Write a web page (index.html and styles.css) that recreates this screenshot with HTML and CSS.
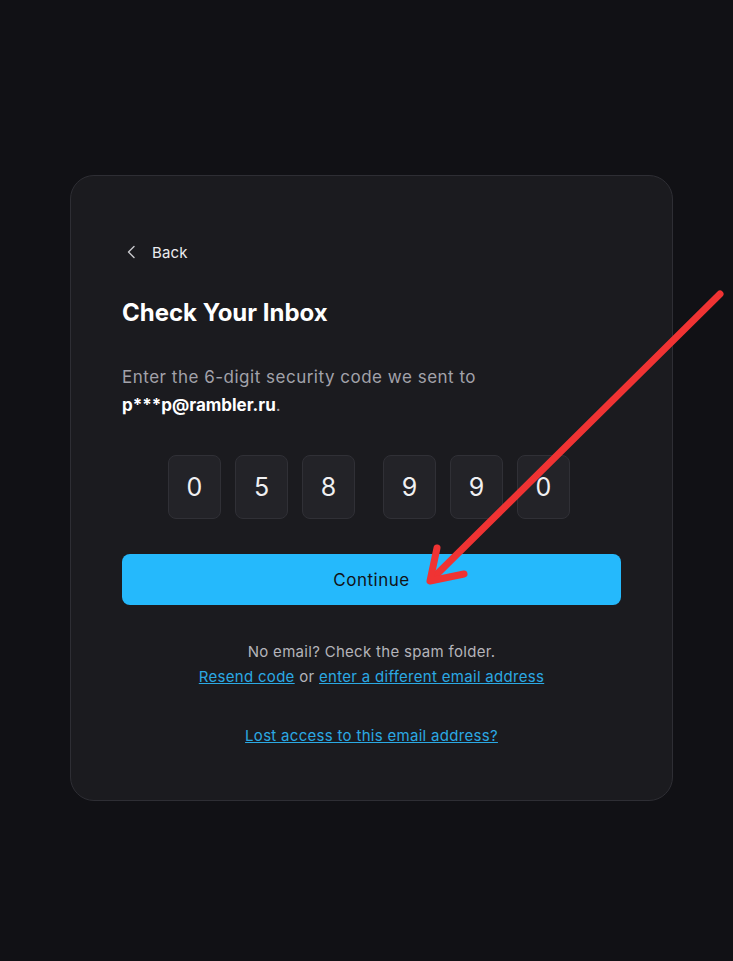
FILE: index.html
```html
<!DOCTYPE html>
<html lang="en">
<head>
    <meta charset="UTF-8">
    <meta name="viewport" content="width=device-width, initial-scale=1.0">
    <title>Check Your Inbox</title>
    <link rel="stylesheet" href="styles.css">
</head>
<body>
    <div class="card">
        <a class="back" href="#">
            <svg width="16" height="16" viewBox="0 0 16 16"><polyline points="10,2.5 4.5,8 10,13.5" fill="none" stroke="#c8c8cc" stroke-width="1.4" stroke-linecap="round" stroke-linejoin="round"/></svg>
            <span>Back</span>
        </a>

        <h1 class="title">Check Your Inbox</h1>

        <p class="desc">Enter the 6-digit security code we sent to <strong>p***p@rambler.ru</strong>.</p>

        <div class="code">
            <div class="group">
                <div class="digit">0</div>
                <div class="digit">5</div>
                <div class="digit">8</div>
            </div>
            <div class="group">
                <div class="digit">9</div>
                <div class="digit">9</div>
                <div class="digit">0</div>
            </div>
        </div>

        <button class="continue" type="button">Continue</button>

        <div class="help">
            <p>No email? Check the spam folder.</p>
            <p><a href="#">Resend code</a> or <a href="#">enter a different email address</a></p>
        </div>

        <p class="lost"><a href="#">Lost access to this email address?</a></p>
    </div>

    <!-- annotation arrow drawn over the screenshot -->
    <svg class="arrow" width="733" height="961" viewBox="0 0 733 961">
        <g fill="none" stroke="#f03333" stroke-width="7" stroke-linecap="round" stroke-linejoin="round">
            <line x1="720" y1="294" x2="431" y2="580"/>
            <polyline points="437,548 430,581 464,574"/>
        </g>
    </svg>
</body>
</html>
```

FILE: styles.css
```css
body {
    margin: 0;
    background: #111115;
    font-family: Inter, "Noto Sans", sans-serif;
    color: #f2f2f4;
    min-height: 961px;
}
.card {
    width: 499px;
    margin: 175px 0 0 70px;
    padding: 64px 51px 52px;
    background: #1b1b1f;
    border: 1px solid #2e2e34;
    border-radius: 24px;
}
.back {
    display: flex;
    align-items: center;
    gap: 12px;
    height: 24px;
    padding-left: 2px;
    color: #ececef;
    font-size: 15px;
    letter-spacing: 0.01em;
    text-decoration: none;
}
.title {
    margin: 33px 0 0;
    font-size: 24px;
    line-height: 32px;
    font-weight: 700;
    letter-spacing: 0;
    color: #ffffff;
}
.desc {
    margin: 34px 0 0;
    font-size: 17px;
    line-height: 28px;
    color: #a2a2aa;
    letter-spacing: 0.03em;
}
.desc strong {
    color: #ffffff;
    font-weight: 700;
    letter-spacing: 0;
}
.code {
    display: flex;
    justify-content: center;
    gap: 28px;
    margin-top: 36px;
    padding-right: 5px;
}
.group {
    display: flex;
    gap: 14px;
}
.digit {
    width: 51px;
    height: 62px;
    display: flex;
    align-items: center;
    justify-content: center;
    background: #232328;
    border: 1px solid #303036;
    border-radius: 8px;
    font-size: 25px;
    color: #f0f0f2;
}
.continue {
    display: block;
    width: 100%;
    height: 51px;
    margin-top: 35px;
    border: none;
    border-radius: 8px;
    background: #25b9fc;
    color: #121216;
    font-family: inherit;
    font-size: 17px;
    letter-spacing: 0.03em;
    cursor: pointer;
}
.help {
    margin-top: 34px;
    text-align: center;
    font-size: 15px;
    line-height: 25px;
    letter-spacing: 0.02em;
    color: #b4b4ba;
}
.help p {
    margin: 0;
}
.help a, .lost a {
    color: #2ba9e3;
}
.lost {
    margin: 34px 0 0;
    text-align: center;
    font-size: 15px;
    line-height: 25px;
    letter-spacing: 0.02em;
}
.arrow {
    position: absolute;
    left: 0;
    top: 0;
    pointer-events: none;
}
```
